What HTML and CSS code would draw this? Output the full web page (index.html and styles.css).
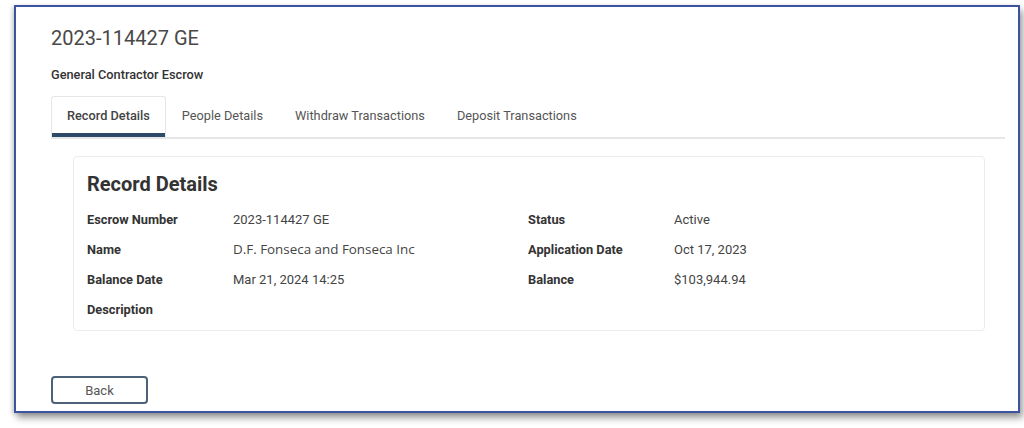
FILE: index.html
```html
<!DOCTYPE html>
<html>
<head>
    <title>2023-114427 GE</title>
    <link rel="stylesheet" href="styles.css">
</head>
<body>
    <div class="frame">
        <h1 class="record-title">2023-114427 GE</h1>
        <p class="record-type">General Contractor Escrow</p>

        <div class="tabs">
            <div class="tab active">Record Details</div>
            <div class="tab">People Details</div>
            <div class="tab">Withdraw Transactions</div>
            <div class="tab">Deposit Transactions</div>
        </div>

        <div class="card">
            <h2>Record Details</h2>
            <div class="details">
                <div class="row">
                    <span class="label">Escrow Number</span>
                    <span class="value">2023-114427 GE</span>
                </div>
                <div class="row">
                    <span class="label">Status</span>
                    <span class="value">Active</span>
                </div>
                <div class="row">
                    <span class="label">Name</span>
                    <span class="value alt">D.F. Fonseca and Fonseca Inc</span>
                </div>
                <div class="row">
                    <span class="label">Application Date</span>
                    <span class="value">Oct 17, 2023</span>
                </div>
                <div class="row">
                    <span class="label">Balance Date</span>
                    <span class="value">Mar 21, 2024 14:25</span>
                </div>
                <div class="row">
                    <span class="label">Balance</span>
                    <span class="value">$103,944.94</span>
                </div>
                <div class="row">
                    <span class="label">Description</span>
                    <span class="value"></span>
                </div>
            </div>
        </div>

        <button type="button" class="back-button">Back</button>
    </div>
</body>
</html>
```

FILE: styles.css
```css
* {
    box-sizing: border-box;
}

html, body {
    height: 100%;
}

body {
    margin: 0;
    padding: 5px 0 0 14px;
    background-color: #fff;
    font-family: Roboto, "Liberation Sans", sans-serif;
    color: #333;
}

.frame {
    width: 1006px;
    height: 408px;
    padding: 0 0 0 35px;
    border: 2px solid #3a54a0;
    box-shadow: 3px 5px 7px rgba(0, 0, 0, 0.38), -2px 1px 4px rgba(0, 0, 0, 0.15);
    background-color: #fff;
    display: flex;
    flex-direction: column;
    align-items: flex-start;
}

.record-title {
    margin: 19px 0 0 0;
    font-size: 20px;
    line-height: 24px;
    font-weight: 400;
    color: #484848;
}

.record-type {
    margin: 17px 0 0 0;
    font-size: 12.75px;
    line-height: 16px;
    font-weight: 500;
    color: #333;
}

.tabs {
    display: flex;
    margin: 13px 0 0 0;
    width: 954px;
    border-bottom: 2px solid #e6e6e6;
}

.tab {
    padding: 0 15px;
    height: 41px;
    line-height: 38px;
    font-size: 12.75px;
    color: #555;
    border: 1px solid transparent;
    border-bottom: none;
}

.tab.active {
    font-weight: 500;
    color: #444;
    background-color: #fff;
    border-color: #e6e6e6;
    border-radius: 3px 3px 0 0;
    box-shadow: inset 0 -4px 0 #2d4a68;
}

.card {
    margin: 17px 0 0 22px;
    width: 912px;
    padding: 14px 13px 6px 13px;
    border: 1px solid #ececec;
    border-radius: 4px;
}

.card h2 {
    margin: 0;
    font-size: 20px;
    line-height: 26px;
    font-weight: 700;
    color: #333;
}

.details {
    display: grid;
    grid-template-columns: 441px 1fr;
    margin-top: 7px;
}

.row {
    display: flex;
    height: 30px;
    align-items: center;
}

.label {
    width: 146px;
    font-size: 12.8px;
    font-weight: 700;
    color: #333;
}

.value {
    font-size: 13px;
    color: #444;
}

.value.alt {
    font-family: "Open Sans", "Noto Sans", sans-serif;
    font-size: 13.4px;
}

.back-button {
    margin-top: 45px;
    width: 97px;
    height: 28px;
    background-color: #fff;
    border: 2px solid #4b6278;
    border-radius: 4px;
    font-family: Roboto, "Liberation Sans", sans-serif;
    font-size: 13px;
    color: #555;
    cursor: pointer;
}
```
